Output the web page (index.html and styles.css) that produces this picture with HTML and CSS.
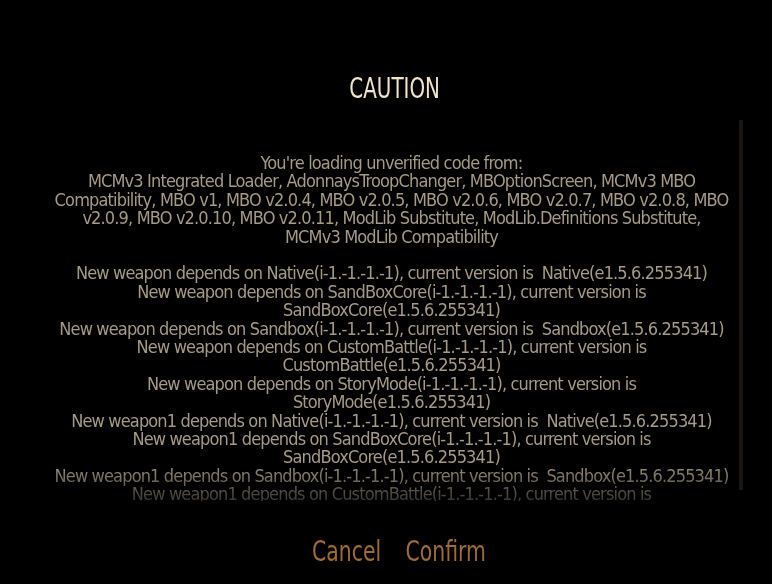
FILE: index.html
```html
<!DOCTYPE html>
<html>
<head>
<meta charset="utf-8">
<link rel="stylesheet" href="styles.css">
</head>
<body>
<div class="dialog">
  <h1 class="title">CAUTION</h1>
  <div class="scroll-row">
    <div class="scroll-content">
      <p class="para">You're loading unverified code from:<br>MCMv3 Integrated Loader, AdonnaysTroopChanger, MBOptionScreen, MCMv3 MBO Compatibility, MBO v1, MBO v2.0.4, MBO v2.0.5, MBO v2.0.6, MBO v2.0.7, MBO v2.0.8, MBO v2.0.9, MBO v2.0.10, MBO v2.0.11, ModLib Substitute, ModLib.Definitions Substitute, MCMv3 ModLib Compatibility</p>
      <p class="para">New weapon depends on Native(i-1.-1.-1.-1), current version is &nbsp;Native(e1.5.6.255341)<br>New weapon depends on SandBoxCore(i-1.-1.-1.-1), current version is SandBoxCore(e1.5.6.255341)<br>New weapon depends on Sandbox(i-1.-1.-1.-1), current version is &nbsp;Sandbox(e1.5.6.255341)<br>New weapon depends on CustomBattle(i-1.-1.-1.-1), current version is CustomBattle(e1.5.6.255341)<br>New weapon depends on StoryMode(i-1.-1.-1.-1), current version is StoryMode(e1.5.6.255341)<br>New weapon1 depends on Native(i-1.-1.-1.-1), current version is &nbsp;Native(e1.5.6.255341)<br>New weapon1 depends on SandBoxCore(i-1.-1.-1.-1), current version is SandBoxCore(e1.5.6.255341)<br>New weapon1 depends on Sandbox(i-1.-1.-1.-1), current version is &nbsp;Sandbox(e1.5.6.255341)<br>New weapon1 depends on CustomBattle(i-1.-1.-1.-1), current version is CustomBattle(e1.5.6.255341)<br>New weapon1 depends on StoryMode(i-1.-1.-1.-1), current version is StoryMode(e1.5.6.255341)</p>
    </div>
    <div class="scrollbar"></div>
  </div>
  <div class="actions">
    <span class="btn">Cancel</span>
    <span class="btn">Confirm</span>
  </div>
</div>
</body>
</html>
```

FILE: styles.css
```css
html, body {
  margin: 0;
  padding: 0;
  background: #000;
  width: 772px;
  height: 584px;
  overflow: hidden;
}
.dialog {
  display: flex;
  flex-direction: column;
  font-family: "DejaVu Sans", sans-serif;
  font-stretch: condensed;
}
.title {
  margin: 73px 0 0 0;
  height: 32px;
  line-height: 32px;
  font-size: 28px;
  font-weight: normal;
  text-align: center;
  color: #efe3c9;
  padding-left: 22px;
  transform: scaleX(0.79);
}
.scroll-row {
  margin-top: 15px;
  margin-left: 54px;
  display: flex;
  gap: 10px;
  height: 381px;
}
.scroll-content {
  width: 675px;
  height: 381px;
  overflow: hidden;
  padding-top: 34px;
  box-sizing: border-box;
  text-align: center;
  font-size: 18px;
  letter-spacing: -0.85px;
  line-height: 18.4px;
  color: #a59a85;
  -webkit-mask-image: linear-gradient(to bottom, #000 calc(100% - 40px), rgba(0,0,0,0.35) 100%);
  mask-image: linear-gradient(to bottom, #000 calc(100% - 40px), rgba(0,0,0,0.35) 100%);
}
.para {
  margin: 0 0 18.4px 0;
}
.scrollbar {
  width: 4px;
  height: 370px;
  background: #1b1612;
}
.actions {
  margin-top: 35px;
  display: flex;
  justify-content: center;
  gap: 30px;
  padding-left: 32px;
  font-size: 28px;
  line-height: 32px;
  color: #9c6c33;
  transform: scaleX(0.81);
}
```
